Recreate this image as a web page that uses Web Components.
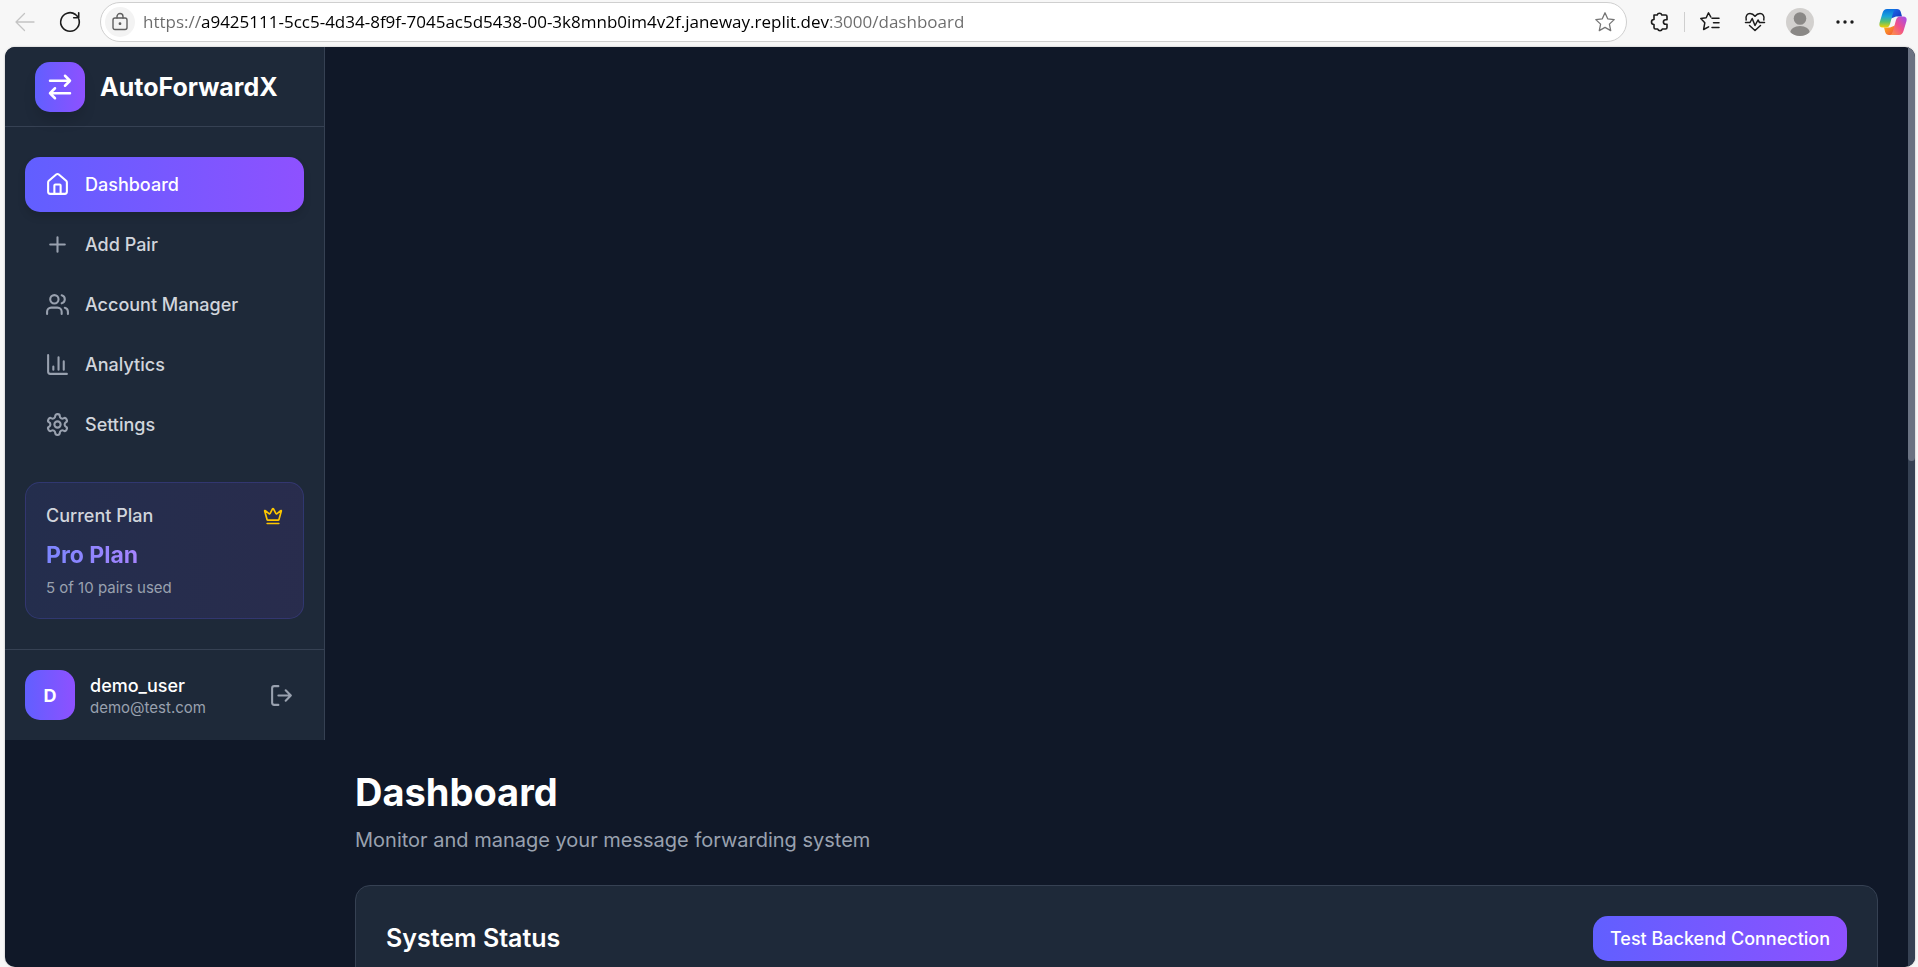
<!DOCTYPE html>
<html lang="en">
<head>
<meta charset="utf-8">
<meta name="viewport" content="width=device-width, initial-scale=1">
<title>AutoForwardX – Dashboard</title>
<style>
  html, body { height: 100%; margin: 0; }
  body { background: #f7f7f7; font-family: Inter, "Liberation Sans", sans-serif; overflow: hidden; }
</style>
</head>
<body>
<browser-window></browser-window>

<script>
const define = (name, html, init) => customElements.define(name, class extends HTMLElement {
  constructor() {
    super();
    this.attachShadow({ mode: 'open' }).innerHTML = html;
  }
  connectedCallback() { if (init) init.call(this, this.shadowRoot); }
});

const ICONS = {
  swap: '<path d="m16 3 4 4-4 4M20 7H4M8 21l-4-4 4-4M4 17h16"/>',
  home: '<path d="M15 21v-8a1 1 0 0 0-1-1h-4a1 1 0 0 0-1 1v8"/><path d="M3 10a2 2 0 0 1 .709-1.528l7-5.999a2 2 0 0 1 2.582 0l7 5.999A2 2 0 0 1 21 10v9a2 2 0 0 1-2 2H5a2 2 0 0 1-2-2z"/>',
  plus: '<path d="M5 12h14M12 5v14"/>',
  users: '<path d="M16 21v-2a4 4 0 0 0-4-4H6a4 4 0 0 0-4 4v2"/><circle cx="9" cy="7" r="4"/><path d="M22 21v-2a4 4 0 0 0-3-3.87M16 3.13a4 4 0 0 1 0 7.75"/>',
  chart: '<path d="M3 3v16a2 2 0 0 0 2 2h16M18 17V9M13 17V5M8 17v-3"/>',
  settings: '<path d="M12.22 2h-.44a2 2 0 0 0-2 2v.18a2 2 0 0 1-1 1.73l-.43.25a2 2 0 0 1-2 0l-.15-.08a2 2 0 0 0-2.73.73l-.22.38a2 2 0 0 0 .73 2.73l.15.1a2 2 0 0 1 1 1.72v.51a2 2 0 0 1-1 1.74l-.15.09a2 2 0 0 0-.73 2.73l.22.38a2 2 0 0 0 2.73.73l.15-.08a2 2 0 0 1 2 0l.43.25a2 2 0 0 1 1 1.73V20a2 2 0 0 0 2 2h.44a2 2 0 0 0 2-2v-.18a2 2 0 0 1 1-1.73l.43-.25a2 2 0 0 1 2 0l.15.08a2 2 0 0 0 2.73-.73l.22-.39a2 2 0 0 0-.73-2.73l-.15-.08a2 2 0 0 1-1-1.74v-.5a2 2 0 0 1 1-1.74l.15-.09a2 2 0 0 0 .73-2.73l-.22-.38a2 2 0 0 0-2.73-.73l-.15.08a2 2 0 0 1-2 0l-.43-.25a2 2 0 0 1-1-1.73V4a2 2 0 0 0-2-2z"/><circle cx="12" cy="12" r="3"/>',
  crown: '<path d="M11.562 3.266a.5.5 0 0 1 .876 0L15.39 8.87a1 1 0 0 0 1.516.294L21.183 5.5a.5.5 0 0 1 .798.519l-2.834 10.246a1 1 0 0 1-.956.734H5.81a1 1 0 0 1-.957-.734L2.02 6.02a.5.5 0 0 1 .798-.519l4.276 3.664a1 1 0 0 0 1.516-.294zM5 21h14"/>',
  logout: '<path d="M9 21H5a2 2 0 0 1-2-2V5a2 2 0 0 1 2-2h4M16 17l5-5-5-5M21 12H9"/>'
};

define('line-icon', `
  <style>
    :host { display: block; width: 25px; height: 25px; flex: none; }
    svg { display: block; width: 100%; height: 100%; fill: none; stroke: currentColor; stroke-width: 2; stroke-linecap: round; stroke-linejoin: round; }
  </style>
  <svg viewBox="0 0 24 24" aria-hidden="true"></svg>`,
  function (root) { root.querySelector('svg').innerHTML = ICONS[this.getAttribute('name')]; });

define('browser-bar', `
  <style>
    :host { display: flex; align-items: center; height: 43px; padding: 0 10px 4px; color: #1b1b1b; }
    button { appearance: none; border: 0; background: none; padding: 0; margin: 0; color: inherit; display: grid; place-items: center; width: 30px; height: 30px; flex: none; }
    svg { display: block; fill: none; stroke: currentColor; stroke-linecap: round; stroke-linejoin: round; overflow: visible; }
    svg.solid { stroke: none; }
    .back { color: #c4c4c4; }
    .reload { margin-left: 15px; }
    .address { flex: 1; min-width: 0; display: flex; align-items: center; height: 38px; margin-left: 15px; padding: 0 6px 0 4px; background: #fff; border: 1px solid #cfcfcf; border-radius: 20px; }
    .lock { background: #f3f3f3; border-radius: 50%; color: #5f5f5f; }
    input { flex: 1; min-width: 0; border: 0; outline: 0; padding: 0; margin-left: 8px; height: 30px; font: 17px "Open Sans", "Noto Sans", sans-serif; color: #1b1b1b;
      background: linear-gradient(90deg, #6b6b6b 0 57px, #000 57px 686px, #6b6b6b 686px); -webkit-background-clip: text; background-clip: text; -webkit-text-fill-color: transparent; }
    .star { color: #767676; }
    .tools { display: flex; align-items: center; margin-left: 18px; }
    .tools i { width: 1px; height: 20px; background: #cfcfcf; margin: 0 10px 0 9px; }
    .gap { margin-left: 15px; }
    .copilot { margin-left: 18px; }
  </style>
  <button class="back" aria-label="Back"><svg width="20" height="20" stroke-width="1.3"><path d="M19 10H1M9.500 1.500 1 10l8.500 8.500"/></svg></button>
  <button class="reload" aria-label="Reload"><svg width="20" height="20" stroke-width="1.6"><path d="M18.800 7A9.300 9.300 0 1 1 15.500 2.500L18.500 5.500M18.700.8V5.700H13.700"/></svg></button>
  <div class="address">
    <button class="lock" aria-label="Site information"><svg width="16" height="18" stroke-width="1.4"><rect x="1" y="5" width="14" height="11.500" rx="2"/><path d="M5 5V3.500a3 3 0 0 1 6 0V5"/><circle cx="8" cy="10.700" r=".7" fill="currentColor"/></svg></button>
    <input type="text" aria-label="Address" value="https://a9425111-5cc5-4d34-8f9f-7045ac5d5438-00-3k8mnb0im4v2f.janeway.replit.dev:3000/dashboard">
    <button class="star" aria-label="Add to favorites"><svg width="20" height="20" stroke-width="1.3"><path d="m10 .8 2.700 6 6.500.8-4.800 4.500 1.300 6.500L10 15.400l-5.700 3.200 1.300-6.500L.8 7.600l6.500-.8z"/></svg></button>
  </div>
  <div class="tools">
    <button aria-label="Extensions"><svg width="20" height="20" stroke-width="1.600"><path d="M4 3h3.200a2.400 2.400 0 0 1 4.600 0H15.500a1.500 1.500 0 0 1 1.500 1.500V7.700h-1.300a2.300 2.300 0 0 0 0 4.600H17V15.500a1.500 1.500 0 0 1-1.500 1.500H12.300a2.400 2.400 0 0 1-4.600 0H5.500A1.500 1.500 0 0 1 4 15.500V12.500a2.500 2.500 0 0 1 0-5z"/></svg></button>
    <i></i>
    <button aria-label="Favorites"><svg width="20" height="20" stroke-width="1.5"><path d="M12 6.200h7M13.500 10.800H19M12 15.400h7M10.800 5 8.500.8l-2.300 5L.8 6.600l4 4.200-1.200 6.700 5-2.700"/></svg></button>
    <button class="gap" aria-label="Browser essentials"><svg width="20" height="20" stroke-width="1.5"><path d="M1.200 8C.2 3.500 2.500 1.500 5 1.500S9 3 10 4.300C11 3 12.500 1.500 15 1.500S19.800 3.500 18.800 8M.5 10.500H5L7.200 6.500 10 13.500 13 8l1.500 2.500h5M4.500 13.500 10 18.500l5.500-5"/></svg></button>
    <button class="gap" aria-label="Profile"><svg class="solid" width="28" height="28"><defs><clipPath id="c"><circle cx="14" cy="14" r="14"/></clipPath></defs><g clip-path="url(#c)"><path d="M0 0h28v28H0z" fill="#d2d0ce"/><circle cx="14" cy="10.500" r="6.300" fill="#8a8886"/><ellipse cx="14" cy="25" rx="10" ry="7" fill="#8a8886"/></g></svg></button>
    <button class="gap" aria-label="Settings and more"><svg class="solid" width="18" height="4"><g fill="#1b1b1b"><circle cx="2" cy="2" r="1.700"/><circle cx="9" cy="2" r="1.700"/><circle cx="16" cy="2" r="1.700"/></g></svg></button>
    <button class="copilot" aria-label="Copilot"><svg class="solid" width="28" height="28">
      <defs>
        <linearGradient id="a" x1="0" y1="0" x2="0" y2="1"><stop offset="0" stop-color="#0a6ee0"/><stop offset=".4" stop-color="#1aa5d8"/><stop offset=".7" stop-color="#5cc26a"/><stop offset="1" stop-color="#f5d000"/></linearGradient>
        <linearGradient id="b" x1="1" y1="0" x2="0" y2="1"><stop offset="0" stop-color="#a04df0"/><stop offset=".5" stop-color="#f0508c"/><stop offset="1" stop-color="#ff9a3c"/></linearGradient>
        <linearGradient id="d" x1="0" y1="0" x2="1" y2="1"><stop offset="0" stop-color="#1f6cf0"/><stop offset="1" stop-color="#1434b8"/></linearGradient>
        <linearGradient id="e" x1="0" y1="0" x2="1" y2="1"><stop offset="0" stop-color="#ffb21a"/><stop offset="1" stop-color="#f0503c"/></linearGradient>
      </defs>
      <path d="M14 1h4q3 0 3.800 3L23 8.500h-6l-5 2z" fill="url(#d)"/>
      <path d="M14 27h-4q-3 0-3.800-3L5 19.500h6l5-2z" fill="url(#e)"/>
      <path d="M8 1h9q-2 .5-3 4l-3 11q-1 3.500-4 3.500H4Q-.5 19.500.5 15L3.500 5Q4.700 1 8 1z" fill="url(#a)"/>
      <path d="M20 27h-9q2-.5 3-4l3-11q1-3.500 4-3.500h3q4.500 0 3.500 4.500L24.500 23q-1.200 4-4.500 4z" fill="url(#b)"/>
    </svg></button>
  </div>`);

define('nav-item', `
  <style>
    :host { display: block; }
    a { display: flex; align-items: center; gap: 15px; padding: 15px 20px; border-radius: 15px; color: #d1d5dc; font-size: 18px; line-height: 25px; font-weight: 500; text-decoration: none; white-space: nowrap; }
    line-icon { color: #99a1af; }
    :host([active]) a { color: #fff; background: linear-gradient(90deg, #615fff, #8e51ff); box-shadow: 0 5px 8px -1px rgba(0,0,0,.15); }
    :host([active]) line-icon { color: #fff; }
  </style>
  <a href="#"><line-icon></line-icon><span><slot></slot></span></a>`,
  function (root) {
    const icon = document.createElement('line-icon');
    icon.setAttribute('name', this.getAttribute('icon'));
    root.querySelector('line-icon').replaceWith(icon);
    if (this.hasAttribute('active')) root.querySelector('a').setAttribute('aria-current', 'page');
  });

define('plan-card', `
  <style>
    :host { display: block; padding: 20px; border: 1px solid rgba(97,95,255,.2); border-radius: 15px; background: linear-gradient(90deg, rgba(97,95,255,.1), rgba(142,81,255,.1)); }
    .row { display: flex; align-items: center; justify-content: space-between; margin-bottom: 10px; font-size: 18px; line-height: 25px; font-weight: 500; color: #d1d5dc; }
    line-icon { width: 20px; height: 20px; color: #fdc700; }
    strong { display: block; width: fit-content; font-size: 23px; line-height: 35px; font-weight: 700; color: #8f86ff; background: linear-gradient(90deg, #7c86ff, #a684ff); -webkit-background-clip: text; background-clip: text; -webkit-text-fill-color: transparent; }
    p { margin: 5px 0 0; font-size: 15px; line-height: 20px; color: #99a1af; }
  </style>
  <div class="row"><span>Current Plan</span><line-icon name="crown"></line-icon></div>
  <strong>Pro Plan</strong>
  <p>5 of 10 pairs used</p>`);

define('user-panel', `
  <style>
    :host { display: flex; align-items: center; padding: 20px; border-top: 1px solid #364153; }
    .avatar { display: grid; place-items: center; width: 50px; height: 50px; border-radius: 15px; background: linear-gradient(90deg, #615fff, #8e51ff); color: #fff; font-size: 18px; font-weight: 700; }
    .who { flex: 1; margin-left: 15px; }
    .name { font-size: 18px; line-height: 25px; font-weight: 500; color: #fff; }
    .mail { font-size: 15px; line-height: 20px; color: #99a1af; }
    button { appearance: none; border: 0; background: none; padding: 10px; margin: 0; color: #99a1af; }
  </style>
  <div class="avatar">D</div>
  <div class="who"><div class="name">demo_user</div><div class="mail">demo@test.com</div></div>
  <button aria-label="Log out"><line-icon name="logout"></line-icon></button>`);

define('side-bar', `
  <style>
    :host { display: block; box-sizing: border-box; background: #1e2939; border-right: 1px solid #364153; }
    header { display: flex; align-items: center; gap: 15px; box-sizing: border-box; height: 80px; padding: 0 30px; border-bottom: 1px solid #364153; color: #fff; font-size: 25px; font-weight: 700; }
    .logo { display: grid; place-items: center; width: 50px; height: 50px; border-radius: 15px; background: linear-gradient(90deg, #615fff, #8e51ff); box-shadow: 0 10px 15px -4px rgba(0,0,0,.18); }
    .logo line-icon { width: 30px; height: 30px; }
    nav { display: grid; gap: 5px; padding: 30px 20px; }
    plan-card { margin: 0 20px 30px; }
  </style>
  <header><div class="logo"><line-icon name="swap"></line-icon></div><span>AutoForwardX</span></header>
  <nav>
    <nav-item icon="home" active>Dashboard</nav-item>
    <nav-item icon="plus">Add Pair</nav-item>
    <nav-item icon="users">Account Manager</nav-item>
    <nav-item icon="chart">Analytics</nav-item>
    <nav-item icon="settings">Settings</nav-item>
  </nav>
  <plan-card></plan-card>
  <user-panel></user-panel>`);

define('status-card', `
  <style>
    :host { display: block; padding: 30px; background: #1e2939; border: 1px solid #364153; border-radius: 15px; }
    header { display: flex; align-items: center; justify-content: space-between; }
    h2 { margin: 0; font-size: 25px; line-height: 35px; font-weight: 600; color: #fff; }
    button { appearance: none; border: 0; margin: 0; padding: 10px 17px; border-radius: 15px; background: linear-gradient(90deg, #615fff, #8e51ff); color: #fff; font: 500 18px/25px Inter, sans-serif; }
  </style>
  <header><h2>System Status</h2><button>Test Backend Connection</button></header>`);

define('dashboard-page', `
  <style>
    :host { display: block; padding: 30px; }
    h1 { margin: 0; font-size: 38px; line-height: 45px; font-weight: 700; color: #fff; }
    p { margin: 10px 0 30px; font-size: 20px; line-height: 30px; color: #99a1af; }
  </style>
  <h1>Dashboard</h1>
  <p>Monitor and manage your message forwarding system</p>
  <status-card></status-card>`);

define('scroll-track', `
  <style>
    :host { display: block; width: 7px; background: #364153; }
    div { height: 45%; background: #6a7282; border-radius: 0 0 4px 4px; }
  </style>
  <div></div>`);

define('browser-window', `
  <style>
    :host { display: flex; flex-direction: column; height: 100vh; }
    .view { flex: 1; min-height: 0; display: flex; margin: 0 3px 0 5px; border-radius: 10px; overflow: hidden; background: #101828; box-shadow: 0 0 2px rgba(0,0,0,.3); }
    .page { flex: 1; min-width: 0; overflow: hidden; display: grid; grid-template-columns: 320px minmax(0, 1fr); align-content: start; }
    dashboard-page { grid-area: 2 / 2; }
  </style>
  <browser-bar></browser-bar>
  <div class="view">
    <div class="page"><side-bar></side-bar><dashboard-page></dashboard-page></div>
    <scroll-track></scroll-track>
  </div>`);
</script>
</body>
</html>
